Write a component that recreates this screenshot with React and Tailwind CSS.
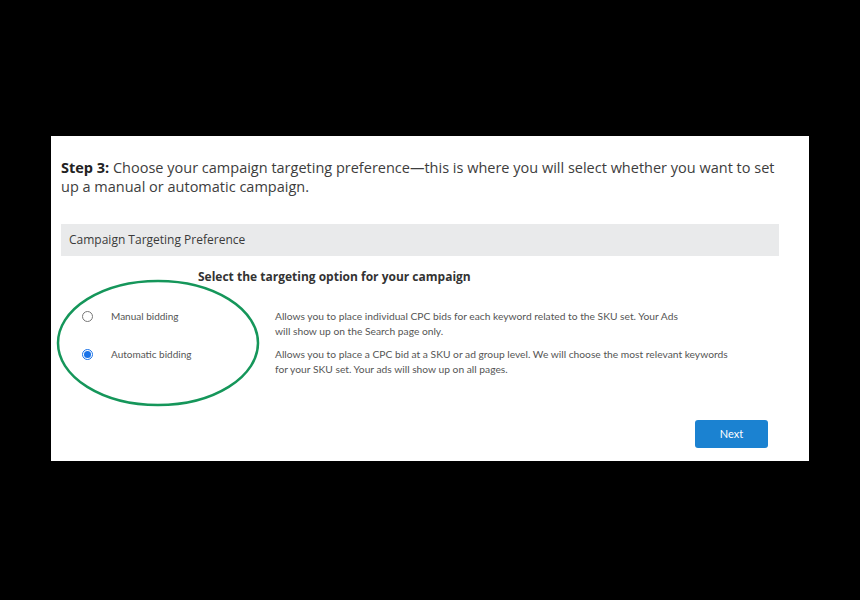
import React from "react";

function Radio({ checked }) {
  return checked ? (
    <span className="flex h-[11px] w-[11px] shrink-0 items-center justify-center rounded-full border border-[#1a73e8] bg-white">
      <span className="h-[7px] w-[7px] rounded-full bg-[#1a73e8]" />
    </span>
  ) : (
    <span className="h-[11px] w-[11px] shrink-0 rounded-full border border-[#777] bg-white" />
  );
}

export default function App() {
  return (
    <div className="relative h-[600px] w-[860px] bg-black pl-[51px] pt-[136px]" style={{ fontFamily: '"Lato", "Liberation Sans", sans-serif' }}>
      <div className="relative flex h-[325px] w-[758px] flex-col bg-white px-[10px]">
        <div className="pt-[22px] text-[14.5px] leading-[19px] text-[#3d3d3d] whitespace-nowrap" style={{ fontFamily: '"Open Sans", "Liberation Sans", sans-serif' }}>
          <span className="font-bold text-[#222]">Step 3:</span> Choose your campaign targeting preference—this is where you will select whether you want to set
          <br />
          up a manual or automatic campaign.
        </div>
        <div className="mt-[28px] flex h-[32px] w-[718px] items-center bg-[#e9eaeb] px-[8px] text-[12px] font-medium text-[#3a3a3a]" style={{ fontFamily: '"Open Sans", "Liberation Sans", sans-serif' }}>
          Campaign Targeting Preference
        </div>
        <div className="mt-[14px] pl-[137px] text-[12px] font-bold leading-[14px] text-[#333]" style={{ fontFamily: '"Open Sans", "Liberation Sans", sans-serif' }}>
          Select the targeting option for your campaign
        </div>
        <div className="mt-[25px] flex flex-col gap-[8px] leading-[15px] text-[#555]">
          <div className="flex items-start">
            <div className="flex h-[15px] w-[214px] items-center pl-[21px] text-[10px]">
              <Radio />
              <span className="ml-[18px]">Manual bidding</span>
            </div>
            <div className="w-[440px] text-[10.25px]">Allows you to place individual CPC bids for each keyword related to the SKU set. Your Ads<br />will show up on the Search page only.</div>
          </div>
          <div className="flex items-start">
            <div className="flex h-[15px] w-[214px] items-center pl-[21px] text-[10px]">
              <Radio checked />
              <span className="ml-[18px]">Automatic bidding</span>
            </div>
            <div className="w-[480px] text-[10.25px]">Allows you to place a CPC bid at a SKU or ad group level. We will choose the most relevant keywords<br />for your SKU set. Your ads will show up on all pages.</div>
          </div>
        </div>
        <div className="mt-auto mb-[13px] flex justify-end pr-[31px]">
          <button className="h-[28px] w-[73px] rounded-[3px] bg-[#1b82d1] text-[11px] text-white">Next</button>
        </div>
        <svg className="pointer-events-none absolute left-[5px] top-[143px]" width="204" height="128" viewBox="0 0 204 128">
          <ellipse cx="102" cy="64" rx="100" ry="62" fill="none" stroke="#15965a" strokeWidth="2.5" />
        </svg>
      </div>
    </div>
  );
}
